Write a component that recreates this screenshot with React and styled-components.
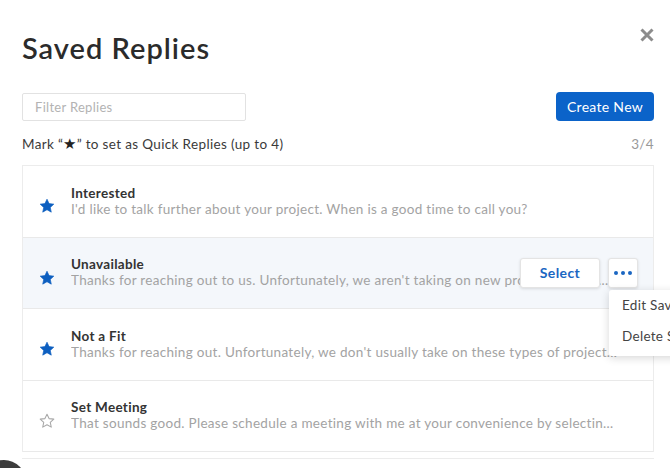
import styled, { createGlobalStyle } from 'styled-components'

const GlobalStyle = createGlobalStyle`
  html, body {
    margin: 0;
    background: #fff;
    overflow: hidden;
  }
  body {
    font-family: Lato, "Open Sans", Arial, sans-serif;
    color: #333;
  }
`

const replies = [
  {
    title: 'Interested',
    body: "I'd like to talk further about your project. When is a good time to call you?",
    starred: true,
  },
  {
    title: 'Unavailable',
    body: "Thanks for reaching out to us. Unfortunately, we aren't taking on new projects at the moment, but we hope to work with you in the future.",
    starred: true,
    active: true,
  },
  {
    title: 'Not a Fit',
    body: "Thanks for reaching out. Unfortunately, we don't usually take on these types of projects, but we wish you the best of luck.",
    starred: true,
  },
  {
    title: 'Set Meeting',
    body: 'That sounds good. Please schedule a meeting with me at your convenience by selecting a time on my calendar.',
    starred: false,
  },
]

const Modal = styled.div`
  position: relative;
  height: 468px;
  padding: 26px 16px 0 22px;
  box-sizing: border-box;
`

const Header = styled.div`
  display: flex;
  justify-content: space-between;
  align-items: flex-start;
`

const Title = styled.h1`
  margin: 0;
  font-size: 29px;
  font-weight: 600;
  color: #2b2b2b;
  line-height: 44px;
  letter-spacing: 1px;
`

const Close = styled.button`
  border: 0;
  background: none;
  padding: 0;
  margin: 1px -2px 0 0;
  width: 18px;
  height: 18px;
  cursor: pointer;
`

const Toolbar = styled.div`
  display: flex;
  justify-content: space-between;
  align-items: center;
  margin-top: 22px;
`

const Filter = styled.input`
  width: 224px;
  height: 28px;
  box-sizing: border-box;
  border: 1px solid #e2e2e2;
  border-radius: 2px;
  padding: 0 12px;
  font-family: inherit;
  font-size: 13px;
  letter-spacing: 0.3px;
  color: #333;
  outline: none;
  &::placeholder {
    color: #b3b3b3;
  }
`

const PrimaryButton = styled.button`
  height: 29px;
  width: 98px;
  border: 0;
  border-radius: 4px;
  background: #0b63c9;
  color: #fff;
  font-family: inherit;
  font-size: 14px;
  letter-spacing: 0.3px;
  cursor: pointer;
`

const Hint = styled.div`
  display: flex;
  justify-content: space-between;
  align-items: center;
  margin-top: 13px;
  font-size: 13.5px;
  letter-spacing: 0.35px;
  color: #3a3a3a;
  line-height: 18px;
`

const HintStar = styled.span`
  font-size: 15px;
  color: #222;
`

const Count = styled.span`
  color: #999;
`

const List = styled.div`
  margin-top: 12px;
  border: 1px solid #ececec;
  border-bottom: 0;
`

const Row = styled.div`
  position: relative;
  display: flex;
  align-items: center;
  height: 70.5px;
  padding: 0 36px 0 16px;
  border-bottom: 1px solid #e9e9e9;
  background: ${p => (p.$active ? '#f4f7fb' : '#fff')};
`

const StarSlot = styled.div`
  width: 16px;
  height: 16px;
  margin: 10px 16px 0 0;
  flex-shrink: 0;
`

const Text = styled.div`
  min-width: 0;
  flex: 1;
`

const ReplyTitle = styled.div`
  font-size: 13.5px;
  font-weight: 700;
  letter-spacing: 0.3px;
  color: #333;
  line-height: 15px;
`

const ReplyBody = styled.div`
  font-size: 13.5px;
  letter-spacing: 0.3px;
  color: #a3a3a3;
  line-height: 16px;
  white-space: nowrap;
  overflow: hidden;
  text-overflow: ellipsis;
`

const Actions = styled.div`
  position: absolute;
  top: 20px;
  right: 15px;
  display: flex;
  gap: 8px;
`

const SelectButton = styled.button`
  width: 80px;
  height: 30px;
  border: 1px solid #e4e4e4;
  border-radius: 3px;
  background: #fff;
  box-shadow: 0 1px 3px rgba(0, 0, 0, 0.12);
  color: #1a66c2;
  font-family: inherit;
  font-size: 14px;
  font-weight: 700;
  letter-spacing: 0.4px;
  cursor: pointer;
`

const MoreWrap = styled.div`
  position: relative;
`

const MoreButton = styled.button`
  width: 30px;
  height: 30px;
  display: flex;
  align-items: center;
  justify-content: center;
  gap: 3px;
  border: 1px solid #e4e4e4;
  border-radius: 3px;
  background: #fff;
  box-shadow: 0 1px 3px rgba(0, 0, 0, 0.12);
  padding: 0;
  cursor: pointer;
`

const Dot = styled.span`
  width: 4px;
  height: 4px;
  border-radius: 50%;
  background: #1a66c2;
`

const Menu = styled.div`
  position: absolute;
  top: 32px;
  left: 1px;
  width: 150px;
  padding: 0 0 4px;
  background: #fff;
  border-radius: 3px;
  box-shadow: 0 2px 8px rgba(0, 0, 0, 0.16);
  z-index: 2;
`

const MenuItem = styled.div`
  padding: 0 13px;
  font-size: 13.5px;
  letter-spacing: 0.3px;
  line-height: 31px;
  color: #444;
  white-space: nowrap;
`

const Footer = styled.div`
  margin-top: 6px;
  border-top: 1px solid #ececec;
`

const ChatBubble = styled.div`
  position: absolute;
  left: -18px;
  top: 460px;
  width: 44px;
  height: 44px;
  border-radius: 50%;
  background: #3c3c3c;
`

function Star({ filled }) {
  return (
    <svg width="16" height="16" viewBox="0 0 24 24">
      <path
        d="M12 1.8l3.1 6.6 7.1.8-5.3 4.9 1.5 7.1L12 17.6l-6.4 3.6 1.5-7.1-5.3-4.9 7.1-.8z"
        fill={filled ? '#0d5fc0' : 'none'}
        stroke={filled ? '#0d5fc0' : '#a8a8a8'}
        strokeWidth={filled ? 1 : 1.6}
        strokeLinejoin="round"
      />
    </svg>
  )
}

function App() {
  return (
    <Modal>
      <GlobalStyle />
      <Header>
        <Title>Saved Replies</Title>
        <Close aria-label="Close">
          <svg width="16" height="16" viewBox="0 0 16 16">
            <path d="M2.5 2.5l11 11M13.5 2.5l-11 11" stroke="#8c8c8c" strokeWidth="3" />
          </svg>
        </Close>
      </Header>
      <Toolbar>
        <Filter placeholder="Filter Replies" />
        <PrimaryButton>Create New</PrimaryButton>
      </Toolbar>
      <Hint>
        <span>
          Mark “<HintStar>★</HintStar>” to set as Quick Replies (up to 4)
        </span>
        <Count>3/4</Count>
      </Hint>
      <List>
        {replies.map(r => (
          <Row key={r.title} $active={r.active}>
            <StarSlot>
              <Star filled={r.starred} />
            </StarSlot>
            <Text>
              <ReplyTitle>{r.title}</ReplyTitle>
              <ReplyBody>{r.body}</ReplyBody>
            </Text>
            {r.active && (
              <Actions>
                <SelectButton>Select</SelectButton>
                <MoreWrap>
                  <MoreButton aria-label="More">
                    <Dot />
                    <Dot />
                    <Dot />
                  </MoreButton>
                  <Menu>
                    <MenuItem>Edit Saved Reply</MenuItem>
                    <MenuItem>Delete Saved Reply</MenuItem>
                  </Menu>
                </MoreWrap>
              </Actions>
            )}
          </Row>
        ))}
      </List>
      <Footer />
      <ChatBubble />
    </Modal>
  )
}

export default App
